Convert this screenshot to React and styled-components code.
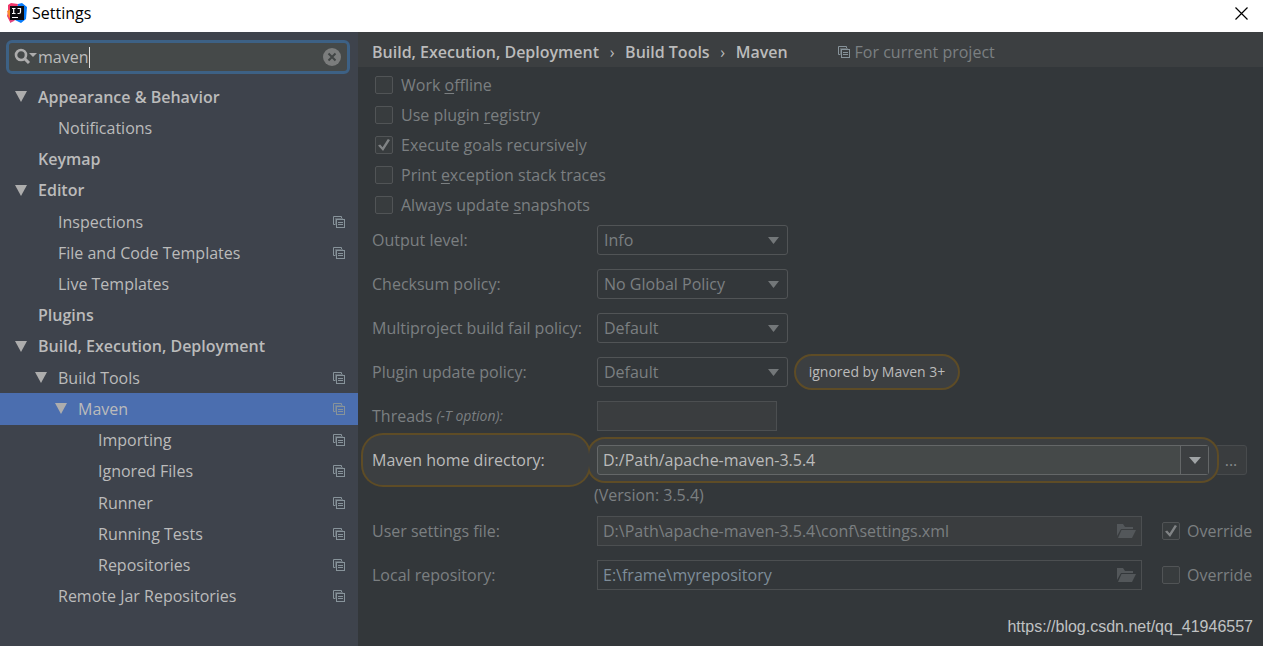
import React, { useState } from "react";
import styled, { createGlobalStyle } from "styled-components";

const treeItems = [
    { label: "Appearance & Behavior", level: 0, bold: true, open: true },
    { label: "Notifications", level: 1 },
    { label: "Keymap", level: 0, bold: true },
    { label: "Editor", level: 0, bold: true, open: true },
    { label: "Inspections", level: 1, project: true },
    { label: "File and Code Templates", level: 1, project: true },
    { label: "Live Templates", level: 1 },
    { label: "Plugins", level: 0, bold: true },
    { label: "Build, Execution, Deployment", level: 0, bold: true, open: true },
    { label: "Build Tools", level: 1, open: true, project: true },
    { label: "Maven", level: 2, open: true, project: true },
    { label: "Importing", level: 3, project: true },
    { label: "Ignored Files", level: 3, project: true },
    { label: "Runner", level: 3, project: true },
    { label: "Running Tests", level: 3, project: true },
    { label: "Repositories", level: 3, project: true },
    { label: "Remote Jar Repositories", level: 1, project: true },
]

const options = [
    { name: "offline", before: "Work ", key: "o", after: "ffline" },
    { name: "registry", before: "Use plugin ", key: "r", after: "egistry" },
    { name: "recursive", before: "Execute ", key: "g", after: "oals recursively" },
    { name: "traces", before: "Print ", key: "e", after: "xception stack traces" },
    { name: "snapshots", before: "Always update ", key: "s", after: "napshots" },
]

const policies = [
    { name: "output", label: "Output level:", values: ["Info", "Debug", "Warn", "Error"] },
    { name: "checksum", label: "Checksum policy:", values: ["No Global Policy", "Fail", "Warn"] },
    { name: "fail", label: "Multiproject build fail policy:", values: ["Default", "Fail Fast", "Fail At End", "Never Fail"] },
    { name: "update", label: "Plugin update policy:", values: ["Default", "Update", "Do Not Update"], note: "ignored by Maven 3+" },
]

const Logo = () => (
    <svg width="20" height="20" viewBox="0 0 20 20" aria-hidden="true">
        <path d="M1 2 L4 0 L11 1 L9 13 L3 19 L0 13 L1 9 Z" fill="#f0386b" />
        <path d="M0 8 L4 6 L6 12 L2 15 Z" fill="#f98a2c" />
        <path d="M11 1 L15 0 L20 4 L19 16 L14 20 L8 17 Z" fill="#087cfa" />
        <path d="M3 17 L10 15 L7 18 L3 20 Z" fill="#e0457b" />
        <rect x="3" y="3" width="14" height="14" fill="#0b0b0f" />
        <path d="M5 5.500h3.500M6.700 5.500v5M5 10.500h3.500M10.500 5.500h3v3.500q0 1.500-1.500 1.500h-1.500M5 14.500h6" stroke="#fff" strokeWidth="1.2" fill="none" />
    </svg>
)

const ProjectIcon = () => (
    <svg width="12" height="12" viewBox="0 0 12 12" fill="none" stroke="#87939a" aria-hidden="true">
        <path d="M2 8.500H0.500V0.500H8.500V2" />
        <path d="M2.500 9V2.500H10" strokeOpacity="0.5" />
        <rect x="3.500" y="3.500" width="8" height="8" />
        <path d="M5 6.500h5M5 8.500h5" />
    </svg>
)

const FolderIcon = () => (
    <svg width="20" height="16" viewBox="0 0 20 16" fill="#53575a" aria-hidden="true">
        <path d="M0 1h6l2 3h8v2H4L0 13Z" />
        <path d="M4.500 7h14.500l-4 8H1Z" />
    </svg>
)

const SearchIcon = () => (
    <svg width="24" height="18" viewBox="0 0 24 18" aria-hidden="true">
        <circle cx="7" cy="7" r="5" fill="none" stroke="#adadad" strokeWidth="2.6" />
        <path d="M10.500 10.500L15 15" stroke="#adadad" strokeWidth="3" />
        <path d="M15 5h8l-4 4Z" fill="#adadad" />
    </svg>
)

const App = () => {
    const [query, setQuery] = useState("maven")
    const [selected, setSelected] = useState("Maven")
    const [checked, setChecked] = useState({ recursive: true, settings: true })
    const [home, setHome] = useState("D:/Path/apache-maven-3.5.4")

    const onCheckHandler = (e) => {
        const { name, checked: value } = e.target
        setChecked({ ...checked, [name]: value })
    }

    return (
        <StWindow>
            <GlobalStyle />
            <StTitleBar>
                <Logo />
                <StTitle>Settings</StTitle>
                <StClose aria-label="Close">
                    <svg width="13" height="13" viewBox="0 0 13 13" stroke="#000" strokeWidth="1.2" aria-hidden="true">
                        <path d="M0.500 0.500L12.500 12.500M12.500 0.500L0.500 12.500" />
                    </svg>
                </StClose>
            </StTitleBar>
            <StContent>
                <StSidebar>
                    <StSearch>
                        <SearchIcon />
                        <StSearchInput aria-label="Search settings" value={query} onChange={(e) => setQuery(e.target.value)} />
                        <StCaret />
                        <StClear aria-label="Clear" onClick={() => setQuery("")}>
                            <svg width="18" height="18" viewBox="0 0 18 18" aria-hidden="true">
                                <circle cx="9" cy="9" r="9" fill="#7b7d7d" />
                                <path d="M5.500 5.500l7 7M12.500 5.500l-7 7" stroke="#414545" strokeWidth="2" />
                            </svg>
                        </StClear>
                    </StSearch>
                    <StTree>
                        {treeItems.map((item) => (
                            <StTreeRow
                                key={item.label}
                                $level={item.level}
                                $bold={item.bold}
                                $selected={item.label === selected}
                                onClick={() => setSelected(item.label)}
                            >
                                <StToggle>
                                    {item.open && (
                                        <svg width="12" height="11" viewBox="0 0 12 11" fill="#adadad" aria-hidden="true">
                                            <path d="M0 0h12L6 11Z" />
                                        </svg>
                                    )}
                                </StToggle>
                                <StTreeLabel>{item.label}</StTreeLabel>
                                {item.project && <ProjectIcon />}
                            </StTreeRow>
                        ))}
                    </StTree>
                </StSidebar>
                <StMain>
                    <StHeader>
                        <StCrumb>Build, Execution, Deployment</StCrumb>
                        <StArrow>›</StArrow>
                        <StCrumb>Build Tools</StCrumb>
                        <StArrow>›</StArrow>
                        <StCrumb>Maven</StCrumb>
                        <StScope>
                            <ProjectIcon />
                            For current project
                        </StScope>
                    </StHeader>
                    <StOptions>
                        {options.map((option) => (
                            <StCheckLabel key={option.name}>
                                <StCheckbox type="checkbox" name={option.name} checked={!!checked[option.name]} onChange={onCheckHandler} />
                                <span>{option.before}<u>{option.key}</u>{option.after}</span>
                            </StCheckLabel>
                        ))}
                    </StOptions>
                    <StForm>
                        {policies.map((policy) => (
                            <React.Fragment key={policy.name}>
                                <StLabel htmlFor={policy.name}>{policy.label}</StLabel>
                                <StField>
                                    <StSelect id={policy.name}>
                                        {policy.values.map((value) => <option key={value}>{value}</option>)}
                                    </StSelect>
                                    {policy.note && <StNote>{policy.note}</StNote>}
                                </StField>
                            </React.Fragment>
                        ))}
                        <StLabel htmlFor="threads">Threads <StHint>(-T option):</StHint></StLabel>
                        <StField>
                            <StThreads id="threads" type="text" />
                        </StField>

                        <StHomeLabel htmlFor="home">
                            <span>Maven home directory:</span>
                        </StHomeLabel>
                        <StField>
                            <StHomeRing>
                                <StCombo>
                                    <StComboInput id="home" type="text" value={home} onChange={(e) => setHome(e.target.value)} />
                                    <StComboButton aria-label="Show directories">
                                        <svg width="12" height="7" viewBox="0 0 12 7" fill="#a0a4a6" aria-hidden="true">
                                            <path d="M0 0h12L6 7Z" />
                                        </svg>
                                    </StComboButton>
                                </StCombo>
                            </StHomeRing>
                            <StBrowse>...</StBrowse>
                        </StField>
                        <StVersion>(Version: 3.5.4)</StVersion>

                        <StLabel htmlFor="settingsFile">User settings file:</StLabel>
                        <StField>
                            <StPath $filled>
                                <StPathInput id="settingsFile" type="text" defaultValue={"D:\\Path\\apache-maven-3.5.4\\conf\\settings.xml"} />
                                <FolderIcon />
                            </StPath>
                            <StOverride>
                                <StCheckbox type="checkbox" name="settings" checked={!!checked.settings} onChange={onCheckHandler} />
                                Override
                            </StOverride>
                        </StField>
                        <StLabel htmlFor="repository">Local repository:</StLabel>
                        <StField>
                            <StPath>
                                <StPathInput id="repository" type="text" defaultValue={"E:\\frame\\myrepository"} $blue />
                                <FolderIcon />
                            </StPath>
                            <StOverride>
                                <StCheckbox type="checkbox" name="repo" checked={!!checked.repo} onChange={onCheckHandler} />
                                Override
                            </StOverride>
                        </StField>
                    </StForm>
                    <StFooter>
                        <StLink href="https://blog.csdn.net/qq_41946557">https://blog.csdn.net/qq_41946557</StLink>
                    </StFooter>
                </StMain>
            </StContent>
        </StWindow>
    )
}

export default App;

const GlobalStyle = createGlobalStyle`
    * {
        box-sizing: border-box;
    }
    body {
        margin: 0;
        background: #33373a;
    }
    body, input, select, button {
        font-family: "Open Sans", "Noto Sans", sans-serif;
        font-size: 16px;
    }
    button {
        padding: 0;
        border: none;
        background: none;
    }
    input, select, button {
        outline: none;
    }
    svg {
        flex: none;
        display: block;
    }
`
const StWindow = styled.div`
    display: flex;
    flex-direction: column;
    min-height: 100vh;
    line-height: 24px;
`
const StTitleBar = styled.header`
    display: flex;
    align-items: center;
    height: 32px;
    padding: 0 15px 6px 7px;
    background: #fff;
    color: #000;
`
const StTitle = styled.span`
    flex: 1;
    padding-left: 5px;
`
const StClose = styled.button`
    display: flex;
`
const StContent = styled.div`
    display: flex;
    flex: 1;
`
const StSidebar = styled.aside`
    display: flex;
    flex-direction: column;
    flex: none;
    width: 358px;
    padding: 8px 0 34px;
    background: #3e434c;
    color: #bbb;
`
const StSearch = styled.div`
    display: flex;
    align-items: center;
    height: 34px;
    margin: 0 8px 7px 6px;
    padding: 0 6px 0 5px;
    border: 3px solid #3d6185;
    border-radius: 6px;
    background: #454949;
`
const StSearchInput = styled.input`
    field-sizing: content;
    min-width: 1px;
    padding: 0;
    border: none;
    background: none;
    color: #bbb;
    caret-color: transparent;
`
const StCaret = styled.span`
    width: 1px;
    height: 21px;
    background: #ddd;
`
const StClear = styled.button`
    margin-left: auto;
`
const StTree = styled.ul`
    display: flex;
    flex-direction: column;
    flex: 1;
    margin: 0;
    padding: 0;
    list-style: none;
`
const StTreeRow = styled.li`
    display: flex;
    align-items: center;
    flex: 1;
    min-height: 31px;
    padding: 0 13px 0 ${({ $level }) => 15 + $level * 20}px;
    font-weight: ${({ $bold }) => ($bold ? 600 : 400)};
    background: ${({ $selected }) => ($selected ? "#4b6eaf" : "transparent")};
`
const StToggle = styled.span`
    width: 23px;
`
const StTreeLabel = styled.span`
    flex: 1;
`
const StMain = styled.main`
    display: flex;
    flex-direction: column;
    flex: 1;
    min-width: 0;
    background: #33373a;
    color: #7b7f81;
`
const StHeader = styled.div`
    display: flex;
    align-items: center;
    height: 35px;
    padding: 4px 14px 0;
    background: #3c3f41;
`
const StCrumb = styled.span`
    color: #bbb;
    font-weight: 600;
`
const StArrow = styled.span`
    width: 26px;
    color: #bbb;
    text-align: center;
`
const StScope = styled.span`
    display: flex;
    align-items: center;
    gap: 5px;
    padding-left: 50px;
`
const StOptions = styled.div`
    display: flex;
    flex-direction: column;
    align-items: flex-start;
    height: 151px;
    padding: 3px 17px 0;
`
const StCheckLabel = styled.label`
    display: flex;
    align-items: center;
    flex: none;
    gap: 8px;
    height: 30px;

    u {
        text-underline-offset: 2px;
    }
`
const StCheckbox = styled.input`
    appearance: none;
    flex: none;
    width: 18px;
    height: 18px;
    margin: 0;
    border: 1px solid #515456;
    border-radius: 2px;
    background: #383c3e;

    &:checked::before {
        content: "";
        display: block;
        width: 12px;
        height: 12px;
        margin: 2px;
        background: #808385;
        clip-path: polygon(0 55%, 18% 45%, 38% 68%, 82% 0, 100% 8%, 42% 100%);
    }
`
const StForm = styled.div`
    display: grid;
    grid-template-columns: 222px 1fr;
    padding: 0 12px 0 14px;
`
const StLabel = styled.label`
    display: flex;
    align-items: center;
    gap: 4px;
    height: 44px;
    white-space: nowrap;
`
const StHint = styled.i`
    font-size: 14px;
`
const StField = styled.div`
    display: flex;
    align-items: center;
    height: 44px;
    padding-left: 3px;
`
const StSelect = styled.select`
    appearance: none;
    width: 191px;
    height: 30px;
    padding: 0 6px;
    border: 1px solid #515456;
    border-radius: 3px;
    color: inherit;
    background: no-repeat right 8px center / 11px 7px
        url("data:image/svg+xml,%3Csvg xmlns='http://www.w3.org/2000/svg' viewBox='0 0 11 7'%3E%3Cpath d='M0 0h11L5.500 7Z' fill='%23737779'/%3E%3C/svg%3E");
`
const StNote = styled.span`
    min-width: 166px;
    height: 36px;
    margin-left: 6px;
    padding: 0 8px;
    border: 2px solid #5e4c26;
    border-radius: 18px;
    background: #3c3f41;
    color: #bbb;
    font-size: 14px;
    line-height: 32px;
    text-align: center;
`
const StThreads = styled.input`
    width: 180px;
    height: 30px;
    border: 1px solid #4c4f51;
    background: #3a3d3f;
`
/* the two rings run into each other: outlines sit below both fills */
const StHomeLabel = styled(StLabel)`
    position: relative;
    color: #bbb;

    &::before, &::after {
        content: "";
        position: absolute;
        inset: -5px 3px -5px -11px;
        border-radius: 22px;
        background: #5e4c26;
    }
    &::after {
        z-index: 1;
        inset: -3px 5px -3px -9px;
        border-radius: 20px;
        background: #3c3f41;
    }
    span {
        position: relative;
        z-index: 2;
    }
`
const StHomeRing = styled.div`
    position: relative;
    flex: 1;

    &::before, &::after {
        content: "";
        position: absolute;
        inset: -8px -10px -8px -10px;
        border-radius: 18px;
        background: #5e4c26;
    }
    &::after {
        z-index: 1;
        inset: -6px -8px -6px -8px;
        border-radius: 16px;
        background: #3c3f41;
    }
`
const StCombo = styled.div`
    position: relative;
    z-index: 2;
    display: flex;
    height: 30px;
    border: 1px solid #646768;
    border-radius: 3px;
    background: #454949;
`
const StComboInput = styled.input`
    flex: 1;
    min-width: 0;
    padding: 0 5px;
    border: none;
    background: none;
    color: #bbb;
`
const StComboButton = styled.button`
    display: flex;
    align-items: center;
    justify-content: center;
    width: 28px;
    border-left: 1px solid #646768;
    background: #3c3f41;
`
const StBrowse = styled.button`
    width: 32px;
    height: 30px;
    margin: 0 4px 0 6px;
    border: 1px solid #484b4d;
    border-radius: 3px;
    background: #3a3d3f;
    color: #85898b;
`
const StVersion = styled.div`
    grid-column: 2;
    height: 27px;
    line-height: 27px;
`
const StPath = styled.div`
    display: flex;
    align-items: center;
    flex: 1;
    height: 30px;
    padding: 0 4px 0 5px;
    border: 1px solid #4c4f51;
    background: ${({ $filled }) => ($filled ? "#3a3d3f" : "transparent")};
`
const StPathInput = styled.input`
    flex: 1;
    min-width: 0;
    padding: 0;
    border: none;
    background: none;
    color: ${({ $blue }) => ($blue ? "#7e8d99" : "#7b7f81")};
`
const StOverride = styled.label`
    display: flex;
    align-items: center;
    gap: 7px;
    width: 89px;
    margin-left: 20px;
`
const StFooter = styled.footer`
    display: flex;
    justify-content: flex-end;
    padding: 18px 10px 0;
`
const StLink = styled.a`
    color: #c0c2c3;
    font-family: "Liberation Sans", sans-serif;
    text-decoration: none;
`
